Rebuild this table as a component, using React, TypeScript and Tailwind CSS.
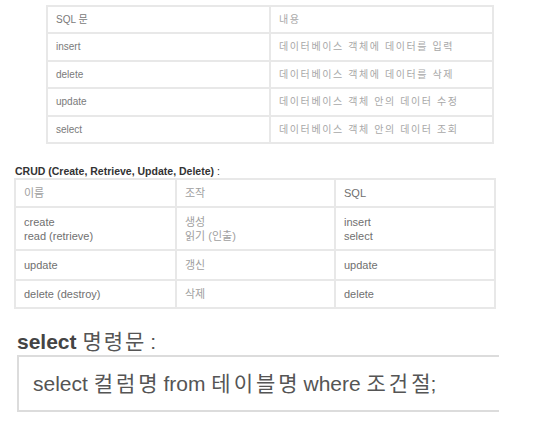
const sqlRows = [
  ['SQL 문', '내용'],
  ['insert', '데이터베이스 객체에 데이터를 입력'],
  ['delete', '데이터베이스 객체에 데이터를 삭제'],
  ['update', '데이터베이스 객체 안의 데이터 수정'],
  ['select', '데이터베이스 객체 안의 데이터 조회'],
];

const sqlHeights = ['h-[27px]', 'h-[28px]', 'h-[27px]', 'h-[28px]', 'h-[27px]'];

const crudRows = [
  { h: 'h-[28px]', cells: [['이름'], ['조작'], ['SQL']] },
  { h: 'h-[43px]', cells: [['create', 'read (retrieve)'], ['생성', '읽기 (인출)'], ['insert', 'select']] },
  { h: 'h-[30px]', cells: [['update'], ['갱신'], ['update']] },
  { h: 'h-[28px]', cells: [['delete (destroy)'], ['삭제'], ['delete']] },
];

const font = "font-['Liberation_Sans','Noto_Sans_CJK_KR',sans-serif]";

// spaced Korean word, no extra space after the last letter
function Wide({ text, gap }: { text: string; gap: string }) {
  return (
    <>
      <span className={gap}>{text.slice(0, -1)}</span>
      {text.slice(-1)}
    </>
  );
}

export default function App() {
  return (
    <div className={`w-[537px] h-[425px] overflow-hidden bg-white ${font}`}>
      <div className="pt-[5px] pl-[46px]">
        <table className="w-[448px] border-collapse table-fixed">
          <tbody>
            {sqlRows.map((row, i) => (
              <tr key={i} className={sqlHeights[i]}>
                {row.map((cell, j) => (
                  <td
                    key={j}
                    className={`border-2 border-[#e8e8e8] px-2 py-0 text-[10px] leading-none align-middle ${
                      j === 0 ? 'text-[#7a7a7a]' : 'text-[#a8a8a8] tracking-[1.6px]'
                    }`}
                  >
                    {cell}
                  </td>
                ))}
              </tr>
            ))}
          </tbody>
        </table>
      </div>

      <div className="mt-[21px] pl-[15px] text-[10.5px] leading-[13px] text-[#333]">
        <b>CRUD (Create, Retrieve, Update, Delete)</b> :
      </div>

      <div className="pl-[14px]">
        <table className="w-[480px] border-collapse table-fixed">
          <colgroup>
            <col className="w-[161px]" />
            <col className="w-[159px]" />
            <col className="w-[160px]" />
          </colgroup>
          <tbody>
            {crudRows.map((row, i) => (
              <tr key={i} className={row.h}>
                {row.cells.map((lines, j) => (
                  <td
                    key={j}
                    className={`border-2 border-[#e8e8e8] px-2 py-0 text-[11px] leading-[14px] align-middle ${
                      j === 1 || (i === 0 && j === 0) ? 'text-[#a0a0a0]' : 'text-[#707070]'
                    }`}
                  >
                    {lines.map((l, k) => (
                      <div key={k}>{l}</div>
                    ))}
                  </td>
                ))}
              </tr>
            ))}
          </tbody>
        </table>
      </div>

      <div className="mt-[21px] pl-[17px] text-[21px] leading-[24px] text-[#555]">
        <b className="text-[#444]">select</b> <Wide text="명령문" gap="tracking-[2px]" /> :
      </div>

      <div className="mt-[1px] ml-[17px] w-[482px] overflow-hidden">
        <div className="w-[520px] h-[57px] border-2 border-[#dcdcdc] flex items-center pl-[14px] text-[21px] text-[#555] whitespace-pre">
          select <Wide text="컬럼명" gap="tracking-[3px]" /> from <Wide text="테이블명" gap="tracking-[3px]" /> where{' '}
          <Wide text="조건절" gap="tracking-[3px]" />;
        </div>
      </div>
    </div>
  );
}
